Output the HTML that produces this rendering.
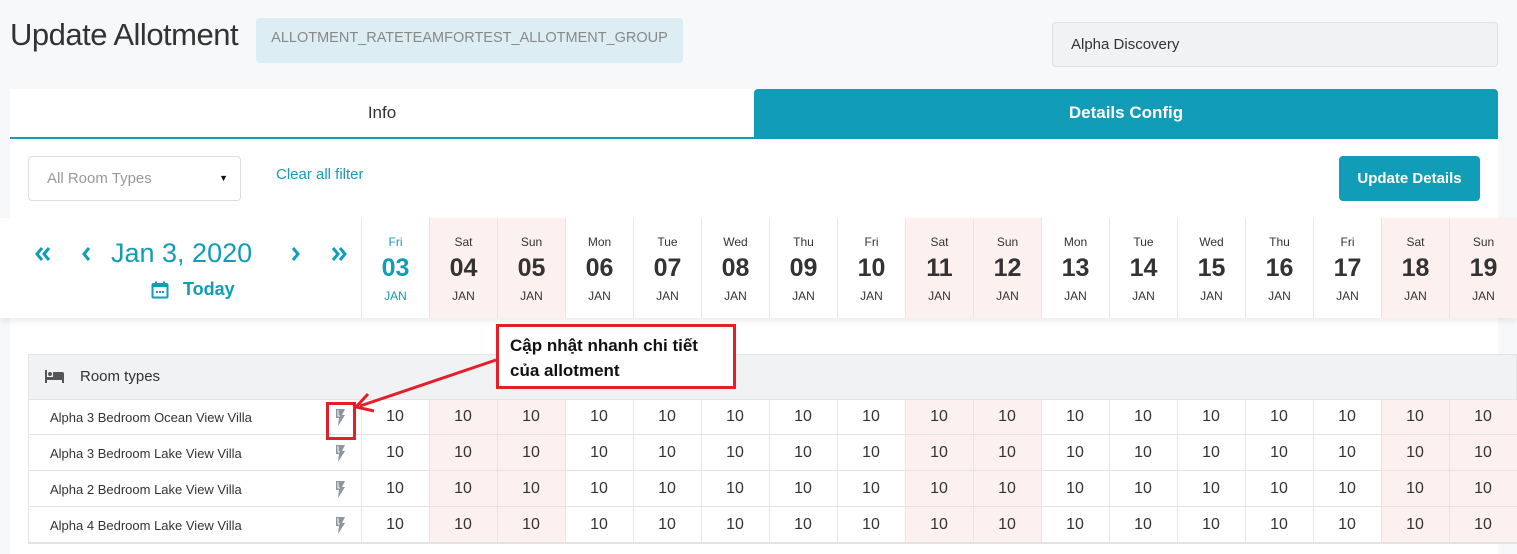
<!DOCTYPE html>
<html><head><meta charset="utf-8"><style>
*{box-sizing:border-box;margin:0;padding:0}
body{width:1517px;height:554px;overflow:hidden;background:#f7f8fa;font-family:"Liberation Sans","Noto Sans CJK SC",sans-serif;position:relative;color:#333}
.a{position:absolute}
.col{position:absolute;width:68px;text-align:center;border-left:1px solid #e6e6e6}
.we{background:#fdf1f0}
</style></head><body>
<div class="a" style="left:10px;top:17px;font-size:31px;color:#333;letter-spacing:-0.5px">Update Allotment</div>
<div class="a" style="left:256px;top:18px;width:427px;height:45px;background:#dceef4;border-radius:4px;color:#888;font-size:14.5px;line-height:40px;text-align:center">ALLOTMENT_RATETEAMFORTEST_ALLOTMENT_GROUP</div>
<div class="a" style="left:1052px;top:22px;width:446px;height:45px;background:#f1f2f4;border:1px solid #e0e0e0;border-radius:4px;font-size:15px;line-height:43px;padding-left:18px;color:#333">Alpha Discovery</div>
<div class="a" style="left:10px;top:89px;width:1488px;height:465px;background:#fff"></div>
<div class="a" style="left:10px;top:89px;width:744px;height:50px;text-align:center;line-height:47px;font-size:17px;color:#333;border-bottom:2px solid #119cb7">Info</div>
<div class="a" style="left:754px;top:89px;width:744px;height:50px;background:#119cb7;border-radius:4px 4px 0 0;text-align:center;line-height:47px;font-size:17px;font-weight:bold;color:#fff">Details Config</div>
<div class="a" style="left:28px;top:156px;width:213px;height:45px;border:1px solid #ddd;border-radius:4px;font-size:15px;color:#999;line-height:43px;padding-left:18px">All Room Types<span style="position:absolute;right:12px;top:0;color:#111;font-size:9px">▼</span></div>
<div class="a" style="left:276px;top:166px;font-size:15px;color:#119cb7">Clear all filter</div>
<div class="a" style="left:1339px;top:156px;width:141px;height:45px;background:#119cb7;border-radius:4px;color:#fff;font-weight:bold;font-size:15px;text-align:center;line-height:45px">Update Details</div>

<div class="a" style="left:0;top:218px;width:1517px;height:100px;background:#fff;box-shadow:0 3px 6px rgba(0,0,0,.08)"></div>
<svg class="a" style="left:34px;top:246px" width="18" height="16" viewBox="0 0 18 16"><path d="M8 2L3 8l5 6M15 2l-5 6 5 6" fill="none" stroke="#119cb7" stroke-width="3"/></svg>
<svg class="a" style="left:80px;top:246px" width="12" height="16" viewBox="0 0 12 16"><path d="M9 2L4 8l5 6" fill="none" stroke="#119cb7" stroke-width="3"/></svg>
<div class="a" style="left:111px;top:238px;font-size:27px;color:#119cb7">Jan 3, 2020</div>
<svg class="a" style="left:290px;top:246px" width="12" height="16" viewBox="0 0 12 16"><path d="M3 2l5 6-5 6" fill="none" stroke="#119cb7" stroke-width="3"/></svg>
<svg class="a" style="left:330px;top:246px" width="18" height="16" viewBox="0 0 18 16"><path d="M3 2l5 6-5 6M10 2l5 6-5 6" fill="none" stroke="#119cb7" stroke-width="3"/></svg>
<svg class="a" style="left:151px;top:281px" width="18" height="18" viewBox="0 0 18 18"><rect x="1.5" y="3" width="15" height="13.5" rx="1" fill="none" stroke="#119cb7" stroke-width="2"/><rect x="1.5" y="3" width="15" height="3" fill="#119cb7"/><rect x="4" y="0.5" width="2" height="4" fill="#119cb7"/><rect x="12" y="0.5" width="2" height="4" fill="#119cb7"/><rect x="5" y="10" width="2" height="2" fill="#119cb7"/><rect x="8" y="10" width="2" height="2" fill="#119cb7"/><rect x="11" y="10" width="2" height="2" fill="#119cb7"/></svg>
<div class="a" style="left:183px;top:279px;font-size:18px;font-weight:bold;color:#119cb7">Today</div>

<div class="a" style="left:28px;top:354px;width:1489px;height:46px;background:#f1f2f4;border:1px solid #e3e3e3"></div>
<svg class="a" style="left:45px;top:370px" width="19" height="13" viewBox="0 0 19 13"><rect x="0" y="0" width="2" height="13" fill="#555"/><rect x="0" y="7" width="19" height="3" fill="#555"/><circle cx="5" cy="4" r="2" fill="#555"/><path d="M8 2h9a2 2 0 0 1 2 2v4H8z" fill="#555"/><rect x="17" y="7" width="2" height="6" fill="#555"/></svg>
<div class="a" style="left:80px;top:368px;font-size:15px;color:#333">Room types</div>
<div class="a" style="left:28px;top:399px;width:1489px;height:145px;border:1px solid #e3e3e3;border-top:0"></div>
<div id="g"></div>

<div class="a" style="left:496px;top:324px;width:240px;height:65px;border:3px solid #e61e2a;background:#fff;font-weight:bold;font-size:17px;line-height:25px;padding:6px 0 0 11px;color:#111;white-space:nowrap">Cập nhật nhanh chi tiết<br>của allotment</div>
<svg class="a" style="left:0;top:0" width="1517" height="554"><line x1="496" y1="360" x2="360" y2="406" stroke="#e61e2a" stroke-width="3"/><path d="M368 394 L356 407 L374 411" fill="none" stroke="#e61e2a" stroke-width="3"/><rect x="327.5" y="403.5" width="27" height="35" fill="none" stroke="#e61e2a" stroke-width="3"/></svg>

<script>
var days=["Fri","Sat","Sun","Mon","Tue","Wed","Thu"],h="";
var names=["Alpha 3 Bedroom Ocean View Villa","Alpha 3 Bedroom Lake View Villa","Alpha 2 Bedroom Lake View Villa","Alpha 4 Bedroom Lake View Villa"];
for(var i=0;i<17;i++){var x=361+i*68,d=days[i%7],we=(d=="Sat"||d=="Sun")?" we":"",n=String(3+i).padStart(2,"0"),c=i==0?"#119cb7":"#333";
h+='<div class="col'+we+'" style="left:'+x+'px;top:218px;height:100px"><div style="font-size:12px;color:'+(i==0?'#119cb7':'#333')+';margin-top:17px">'+d+'</div><div style="font-size:25px;font-weight:bold;color:'+c+';line-height:34px;margin-top:2px">'+n+'</div><div style="font-size:12px;color:'+c+';margin-top:4px">JAN</div></div>';
h+='<div class="col'+we+'" style="left:'+x+'px;top:400px;height:143px"></div>';}
for(var r=0;r<4;r++){var y=399+r*36;
h+='<div class="a" style="left:29px;top:'+y+'px;width:1488px;height:36px;border-bottom:1px solid #e3e3e3"></div>';
h+='<div class="a" style="left:50px;top:'+(y+11)+'px;font-size:13px;color:#333">'+names[r]+'</div>';
h+='<svg class="a" style="left:334px;top:'+(y+9)+'px" width="12" height="19" viewBox="0 0 12 19"><path d="M2 1h9l-3 6h3l-7 11 1-8H2z" fill="#8c95a0"/><path d="M4 2v6h2" fill="none" stroke="#fff" stroke-width="1"/></svg>';
for(var i=0;i<17;i++)h+='<div class="a" style="left:'+(361+i*68)+'px;width:68px;text-align:center;top:'+(y+9)+'px;font-size:16px;color:#333">10</div>';}
document.getElementById("g").innerHTML=h;
</script>
</body></html>
